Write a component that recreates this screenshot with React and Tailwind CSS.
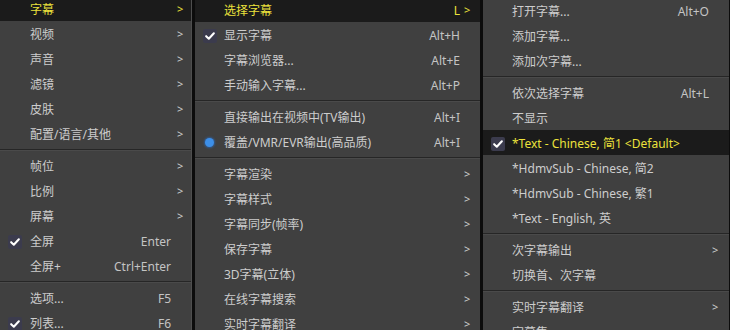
import React from "react";

const col1 = [
	{ label: "字幕", arrow: true, active: true },
	{ label: "视频", arrow: true },
	{ label: "声音", arrow: true },
	{ label: "滤镜", arrow: true },
	{ label: "皮肤", arrow: true },
	{ label: "配置/语言/其他", arrow: true },
	"sep",
	{ label: "帧位", arrow: true },
	{ label: "比例", arrow: true },
	{ label: "屏幕", arrow: true },
	{ label: "全屏", shortcut: "Enter", check: true },
	{ label: "全屏+", shortcut: "Ctrl+Enter" },
	"sep",
	{ label: "选项...", shortcut: "F5" },
	{ label: "列表...", shortcut: "F6", check: true },
];

const col2 = [
	{ label: "选择字幕", shortcut: "L", arrow: true, active: true },
	{ label: "显示字幕", shortcut: "Alt+H", check: true },
	{ label: "字幕浏览器...", shortcut: "Alt+E" },
	{ label: "手动输入字幕...", shortcut: "Alt+P" },
	"sep",
	{ label: "直接输出在视频中(TV输出)", shortcut: "Alt+I" },
	{ label: "覆盖/VMR/EVR输出(高品质)", shortcut: "Alt+I", radio: true },
	"sep",
	{ label: "字幕渲染", arrow: true },
	{ label: "字幕样式", arrow: true },
	{ label: "字幕同步(帧率)", arrow: true },
	{ label: "保存字幕", arrow: true },
	{ label: "3D字幕(立体)", arrow: true },
	{ label: "在线字幕搜索", arrow: true },
	{ label: "实时字幕翻译", arrow: true },
];

const col3 = [
	{ label: "打开字幕...", shortcut: "Alt+O" },
	{ label: "添加字幕..." },
	{ label: "添加次字幕..." },
	"sep",
	{ label: "依次选择字幕", shortcut: "Alt+L" },
	{ label: "不显示" },
	{ label: "*Text - Chinese, 简1 <Default>", check: true, active: true },
	{ label: "*HdmvSub - Chinese, 简2" },
	{ label: "*HdmvSub - Chinese, 繁1" },
	{ label: "*Text - English, 英" },
	"sep",
	{ label: "次字幕输出", arrow: true },
	{ label: "切换首、次字幕" },
	"sep",
	{ label: "实时字幕翻译", arrow: true },
	{ label: "字幕集" },
];

function CheckMark() {
	return (
		<div className="flex h-[14px] w-[14px] items-center justify-center rounded-[2px] bg-[#3b3b4d]">
			<svg viewBox="0 0 14 14" className="h-[12px] w-[12px]">
				<polyline points="2.5,7.2 5.6,10.2 11.5,3.8" fill="none" stroke="#ffffff" strokeWidth="2.4" strokeLinecap="round" strokeLinejoin="round" />
			</svg>
		</div>
	);
}

function Radio() {
	return <div className="h-[9px] w-[9px] rounded-full bg-[#3d8fe8] shadow-[0_0_2px_1px_rgba(40,110,200,0.6)]" />;
}

function Row({ item, gutter, arrowPad }) {
	if (item === "sep") {
		return (
			<div className="flex h-[7px] shrink-0 flex-col justify-center">
				<div className="h-px bg-[#262626]" />
				<div className="h-px bg-[#4a4a4a]" />
			</div>
		);
	}
	const text = item.active ? "text-[#ece23c]" : "text-[#cdcdcd]";
	return (
		<div className={`flex h-[25px] shrink-0 items-center pt-[2px] ${item.active ? "bg-[#1b1b1b]" : ""}`}>
			<div className={`flex shrink-0 items-center justify-center ${gutter}`}>
				{item.check && <CheckMark />}
				{item.radio && <Radio />}
			</div>
			<div className={`flex-1 whitespace-nowrap ${text}`}>{item.label}</div>
			{item.shortcut && <div className={`whitespace-nowrap ${item.active ? "text-[#ece23c]" : "text-[#c4c4c4]"}`}>{item.shortcut}</div>}
			<div className={`w-[20px] shrink-0 ${arrowPad} text-[11px] ${text}`}>{item.arrow ? ">" : ""}</div>
		</div>
	);
}

function Menu({ items, className, gutter, arrowPad }) {
	return (
		<div className={`flex shrink-0 flex-col bg-[#404040] ${className}`}>
			{items.map((item, i) => (
				<Row key={i} item={item} gutter={gutter} arrowPad={arrowPad} />
			))}
		</div>
	);
}

export default function App() {
	return (
		<div
			className="flex h-[330px] w-[730px] overflow-hidden bg-[#0c0c0c] text-[12px]"
			style={{ fontFamily: '"Noto Sans", "Noto Sans CJK SC", sans-serif' }}
		>
			<div className="flex w-[192px] shrink-0 flex-col overflow-hidden border-r border-[#4e4e4e] bg-[#404040]">
				<Menu items={col1} className="-mt-[4px]" gutter="w-[30px]" arrowPad="pl-[6px]" />
			</div>
			<div className="ml-[3px] flex w-[285px] shrink-0 flex-col overflow-hidden bg-[#404040]">
				<Menu items={col2} className="-mt-[3px]" gutter="w-[29px]" arrowPad="pl-[4px]" />
			</div>
			<div className="ml-[3px] flex w-[246px] shrink-0 flex-col overflow-hidden bg-[#404040]">
				<Menu items={col3} className="-mt-[2px]" gutter="w-[29px]" arrowPad="pl-[3px]" />
			</div>
		</div>
	);
}
